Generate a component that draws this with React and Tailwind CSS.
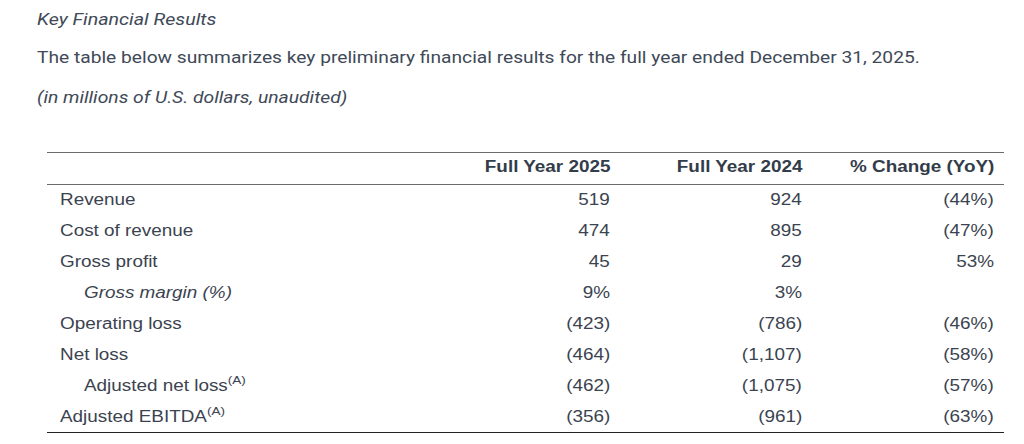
const rows = [
  { label: 'Revenue', a: '519', b: '924', c: '(44%)' },
  { label: 'Cost of revenue', a: '474', b: '895', c: '(47%)' },
  { label: 'Gross profit', a: '45', b: '29', c: '53%' },
  { label: 'Gross margin (%)', a: '9%', b: '3%', c: '', indent: true, italic: true },
  { label: 'Operating loss', a: '(423)', b: '(786)', c: '(46%)' },
  { label: 'Net loss', a: '(464)', b: '(1,107)', c: '(58%)' },
  { label: 'Adjusted net loss', sup: '(A)', a: '(462)', b: '(1,075)', c: '(57%)', indent: true },
  { label: 'Adjusted EBITDA', sup: '(A)', a: '(356)', b: '(961)', c: '(63%)' },
];

// the source text is a touch wider than the font, so stretch each run
function L({ children }) {
  return <span className="inline-block whitespace-nowrap origin-left scale-x-[1.18]">{children}</span>;
}
function R({ children }) {
  return <span className="inline-block whitespace-nowrap origin-right scale-x-[1.18]">{children}</span>;
}

export default function App() {
  return (
    <div className="bg-white w-[1024px] h-[444px] overflow-hidden text-[#404957] font-['Roboto',sans-serif]">
      <div className="pl-[37px] pt-[8px] text-[16.5px] leading-[24px]">
        <p className="w-fit italic whitespace-nowrap origin-left scale-x-[1.19]">Key Financial Results</p>
        <p className="w-fit mt-[14px] whitespace-nowrap origin-left scale-x-[1.163]">
          The table below summarizes key preliminary financial results for the full year ended December 31, 2025.
        </p>
        <p className="w-fit italic mt-[16px] whitespace-nowrap origin-left scale-x-[1.17]">(in millions of U.S. dollars, unaudited)</p>
      </div>

      <table className="ml-[47px] mt-[42px] w-[957px] border-collapse font-['Liberation_Sans',Arial,sans-serif] text-[16px] text-[#3b4350]">
        <thead>
          <tr className="border-t border-b border-[#6b6b6b]">
            <th className="h-[32px] pb-[3px]" />
            <th className="text-right font-bold text-[#333c49] pb-[3px]"><R>Full Year 2025</R></th>
            <th className="w-[192px] text-right font-bold text-[#333c49] pb-[3px]"><R>Full Year 2024</R></th>
            <th className="w-[202px] text-right font-bold text-[#333c49] pr-[10px] pb-[3px]"><R>% Change (YoY)</R></th>
          </tr>
        </thead>
        <tbody className="border-b border-[#222]">
          {rows.map((r, i) => (
            <tr key={i} className="h-[31px]">
              <td className={`${r.indent ? 'pl-[37px]' : 'pl-[13px]'} ${r.italic ? 'italic' : ''}`}>
                <L>
                  {r.label}
                  {r.sup && <sup className="text-[11.5px] -top-[7px]">{r.sup}</sup>}
                </L>
              </td>
              <td className="text-right"><R>{r.a}</R></td>
              <td className="text-right"><R>{r.b}</R></td>
              <td className="text-right pr-[10px]"><R>{r.c}</R></td>
            </tr>
          ))}
        </tbody>
      </table>
    </div>
  );
}
